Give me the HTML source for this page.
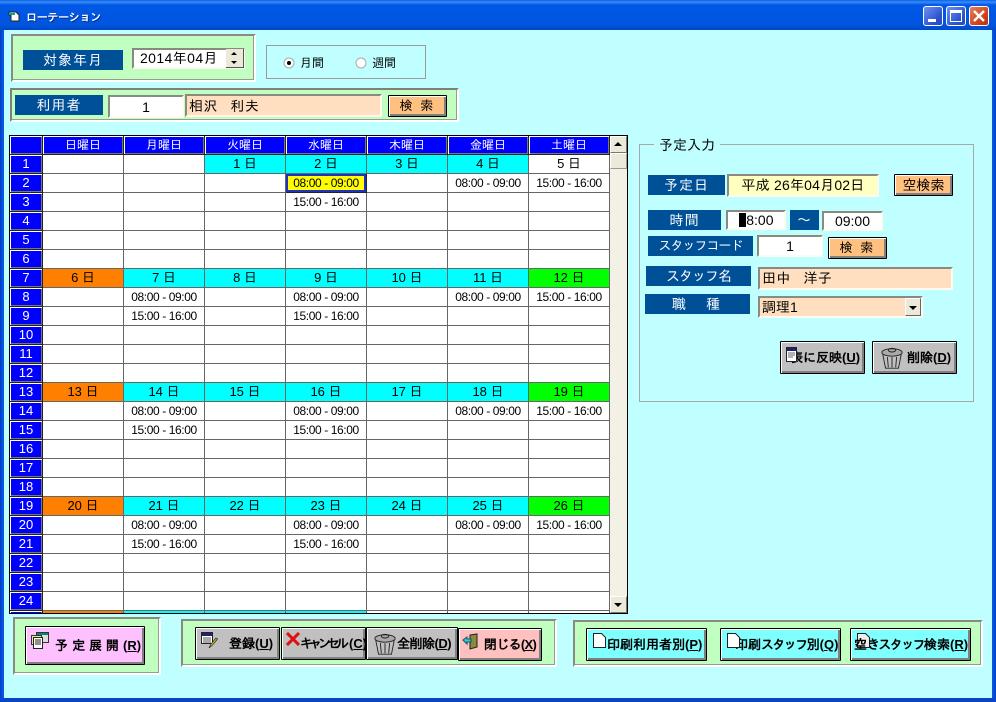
<!DOCTYPE html>
<html><head><meta charset="utf-8"><style>
html,body{margin:0;padding:0}
body{width:996px;height:702px;overflow:hidden;position:relative;background:#BFFFFF;font:12px "Liberation Sans","IPAGothic","Noto Sans CJK JP",sans-serif;color:#000}
.a{position:absolute;box-sizing:border-box;white-space:nowrap}
.p{background:#C0FFC0;border:2px solid;border-color:#8a8a80 #fff #fff #8a8a80;box-shadow:inset -1px -1px 0 #9a9a90}
.l{background:#005098;color:#fff;font-size:14px;letter-spacing:1px;text-align:center;line-height:20px;height:20px}
.i{background:#fff;border:2px solid;border-color:#8a8a80 #fbfbf0 #fbfbf0 #8a8a80;font-size:14px;text-align:center}
.pe{background:#FFDFBF;text-align:left;font-size:14px;letter-spacing:.5px;word-spacing:8px;padding-left:2px}
.b{border:1px solid #000;border-radius:1px;box-shadow:inset 1px 1px 0 #fff,inset -2px -2px 0 #808080;text-align:left;font-weight:bold;color:#000;font-size:13px}
.o{background:#FFC080;font-weight:normal;font-size:13px;line-height:20px;text-align:center}
.g{background:#C0C0C0;line-height:31px}
.cy{background:#80FFFF;line-height:31px}
.k{letter-spacing:-1.6px}
.wb{width:20px;height:20px;top:6px;border:1px solid #fff;border-radius:3px;background:linear-gradient(135deg,#6e94ee,#2a52d0 70%,#2348c4)}
table{border-collapse:collapse;table-layout:fixed;position:absolute;left:-1px;top:-1px}
td,th{padding:0;height:18px;line-height:18px;border:1px solid #666;text-align:center;font-weight:normal;font-size:12px;letter-spacing:-.4px;overflow:hidden;background:#fff}
th{background:#0000FF;color:#fff;border:1px solid #222;box-shadow:inset 1px 1px 0 #fff,inset -1px -1px 0 #777;letter-spacing:0}
tbody th{font-size:13px}
thead th{font-size:12px}
.c{background:#00FFFF}.r{background:#FF8000}.n{background:#00FF00}
.d{font-size:13px;letter-spacing:0}
td.s{background:#FFFF00;box-shadow:inset 0 0 0 2px #2233bb;border:1px solid #222;border-top-color:#d33}
</style></head><body>

<!-- window frame -->
<div class="a" style="left:0;top:0;width:996px;height:30px;background:linear-gradient(#0a5fe8 0,#3a8cf8 2px,#0058e6 5px,#0055e0 24px,#0048c8 30px)"></div>
<div class="a" style="left:0;top:30px;width:4px;height:672px;background:linear-gradient(90deg,#0040c0,#0a5cf0)"></div>
<div class="a" style="left:992px;top:30px;width:4px;height:672px;background:linear-gradient(90deg,#0a5cf0,#0040c0)"></div>
<div class="a" style="left:0;top:698px;width:996px;height:4px;background:#0845c8"></div>
<svg class="a" style="left:8px;top:11px" width="12" height="12" viewBox="0 0 12 12"><path d="M1 1h7l3 3v6H3V4H1z" fill="#fff" stroke="#222"/><path d="M1 2h6v2H1z" fill="#0a8"/></svg>
<div class="a" style="left:26px;top:10px;color:#fff;font-weight:bold;font-size:11px;letter-spacing:-.3px;line-height:16px;text-shadow:1px 1px 0 #003090">ローテーション</div>
<div class="a wb" style="left:923px"><div class="a" style="left:4px;top:12px;width:8px;height:3px;background:#fff"></div></div>
<div class="a wb" style="left:946px"><div class="a" style="left:3px;top:3px;width:12px;height:12px;border:1px solid #fff;border-top-width:3px"></div></div>
<div class="a wb" style="left:969px;background:linear-gradient(135deg,#e8805a,#d0401c 65%,#b83010)"><svg class="a" style="left:3px;top:3px" width="12" height="12"><path d="M1 1l10 10M11 1L1 11" stroke="#fff" stroke-width="2.4"/></svg></div>

<!-- top controls -->
<div class="a p" style="left:11px;top:34px;width:245px;height:48px"></div>
<div class="a l" style="left:23px;top:50px;width:100px">対象年月</div>
<div class="a i" style="left:132px;top:48px;width:113px;height:21px;text-align:left;padding-left:6px;line-height:17px;letter-spacing:.4px">2014年04月</div>
<div class="a" style="left:226px;top:49px;width:18px;height:10px;background:#ece9d8;border-bottom:1px solid #555;border-right:1px solid #555"><div class="a" style="left:5px;top:3px;border:3px solid transparent;border-bottom:3px solid #000;border-top:0"></div></div>
<div class="a" style="left:226px;top:58px;width:18px;height:10px;background:#ece9d8;border-bottom:1px solid #555;border-right:1px solid #555"><div class="a" style="left:5px;top:3px;border:3px solid transparent;border-top:3px solid #000;border-bottom:0"></div></div>

<div class="a" style="left:266px;top:45px;width:160px;height:34px;border:1px solid #9a9a9a"></div>
<svg class="a" style="left:283px;top:57px" width="13" height="13"><circle cx="6" cy="6" r="5" fill="#fff" stroke="#aaa"/><circle cx="6" cy="6" r="2" fill="#000"/></svg>
<div class="a" style="left:300px;top:55px;line-height:16px">月間</div>
<svg class="a" style="left:355px;top:57px" width="13" height="13"><circle cx="6" cy="6" r="5" fill="#fff" stroke="#aaa"/></svg>
<div class="a" style="left:372px;top:55px;line-height:16px">週間</div>

<div class="a p" style="left:10px;top:88px;width:449px;height:34px;border-color:#808078 #fff #fff #808078"></div>
<div class="a l" style="left:15px;top:95px;width:88px">利用者</div>
<div class="a i" style="left:108px;top:95px;width:76px;height:23px;line-height:20px">1</div>
<div class="a i pe" style="left:185px;top:94px;width:197px;height:23px;line-height:20px">相沢 利夫</div>
<div class="a b o" style="left:388px;top:95px;width:59px;height:22px;letter-spacing:2px;word-spacing:0">検 索</div>

<!-- grid -->
<div class="a" style="left:9px;top:135px;width:619px;height:479px;border:1px solid #000;background:#fff;overflow:hidden">
<table style="width:601px">
<colgroup><col style="width:33px"><col style="width:81px"><col style="width:81px"><col style="width:81px"><col style="width:81px"><col style="width:81px"><col style="width:81px"><col style="width:81px"></colgroup>
<thead><tr><th></th><th>日曜日</th><th>月曜日</th><th>火曜日</th><th>水曜日</th><th>木曜日</th><th>金曜日</th><th>土曜日</th></tr></thead>
<tbody>
<tr><th>1</th><td></td><td></td><td class="c d">1 日</td><td class="c d">2 日</td><td class="c d">3 日</td><td class="c d">4 日</td><td class="d">5 日</td></tr>
<tr><th>2</th><td></td><td></td><td></td><td class="s">08:00 - 09:00</td><td></td><td>08:00 - 09:00</td><td>15:00 - 16:00</td></tr>
<tr><th>3</th><td></td><td></td><td></td><td>15:00 - 16:00</td><td></td><td></td><td></td></tr>
<tr><th>4</th><td></td><td></td><td></td><td></td><td></td><td></td><td></td></tr>
<tr><th>5</th><td></td><td></td><td></td><td></td><td></td><td></td><td></td></tr>
<tr><th>6</th><td></td><td></td><td></td><td></td><td></td><td></td><td></td></tr>
<tr><th>7</th><td class="r d">6 日</td><td class="c d">7 日</td><td class="c d">8 日</td><td class="c d">9 日</td><td class="c d">10 日</td><td class="c d">11 日</td><td class="n d">12 日</td></tr>
<tr><th>8</th><td></td><td>08:00 - 09:00</td><td></td><td>08:00 - 09:00</td><td></td><td>08:00 - 09:00</td><td>15:00 - 16:00</td></tr>
<tr><th>9</th><td></td><td>15:00 - 16:00</td><td></td><td>15:00 - 16:00</td><td></td><td></td><td></td></tr>
<tr><th>10</th><td></td><td></td><td></td><td></td><td></td><td></td><td></td></tr>
<tr><th>11</th><td></td><td></td><td></td><td></td><td></td><td></td><td></td></tr>
<tr><th>12</th><td></td><td></td><td></td><td></td><td></td><td></td><td></td></tr>
<tr><th>13</th><td class="r d">13 日</td><td class="c d">14 日</td><td class="c d">15 日</td><td class="c d">16 日</td><td class="c d">17 日</td><td class="c d">18 日</td><td class="n d">19 日</td></tr>
<tr><th>14</th><td></td><td>08:00 - 09:00</td><td></td><td>08:00 - 09:00</td><td></td><td>08:00 - 09:00</td><td>15:00 - 16:00</td></tr>
<tr><th>15</th><td></td><td>15:00 - 16:00</td><td></td><td>15:00 - 16:00</td><td></td><td></td><td></td></tr>
<tr><th>16</th><td></td><td></td><td></td><td></td><td></td><td></td><td></td></tr>
<tr><th>17</th><td></td><td></td><td></td><td></td><td></td><td></td><td></td></tr>
<tr><th>18</th><td></td><td></td><td></td><td></td><td></td><td></td><td></td></tr>
<tr><th>19</th><td class="r d">20 日</td><td class="c d">21 日</td><td class="c d">22 日</td><td class="c d">23 日</td><td class="c d">24 日</td><td class="c d">25 日</td><td class="n d">26 日</td></tr>
<tr><th>20</th><td></td><td>08:00 - 09:00</td><td></td><td>08:00 - 09:00</td><td></td><td>08:00 - 09:00</td><td>15:00 - 16:00</td></tr>
<tr><th>21</th><td></td><td>15:00 - 16:00</td><td></td><td>15:00 - 16:00</td><td></td><td></td><td></td></tr>
<tr><th>22</th><td></td><td></td><td></td><td></td><td></td><td></td><td></td></tr>
<tr><th>23</th><td></td><td></td><td></td><td></td><td></td><td></td><td></td></tr>
<tr><th>24</th><td></td><td></td><td></td><td></td><td></td><td></td><td></td></tr>
<tr><th></th><td class="r"></td><td class="c"></td><td class="c"></td><td class="c"></td><td></td><td></td><td></td></tr>
</tbody></table>
<!-- scrollbar -->
<div class="a" style="left:600px;top:0;width:17px;height:477px;background:#f3f1e6"></div>
<div class="a" style="left:600px;top:0;width:17px;height:17px;background:#ece9d8;border:1px solid;border-color:#fff #777 #777 #fff"><div class="a" style="left:3px;top:5px;border:4px solid transparent;border-bottom:4px solid #000;border-top:0"></div></div>
<div class="a" style="left:600px;top:17px;width:17px;height:16px;background:#ece9d8;border:1px solid;border-color:#fff #999 #999 #fff"></div>
<div class="a" style="left:600px;top:460px;width:17px;height:17px;background:#ece9d8;border:1px solid;border-color:#fff #777 #777 #fff"><div class="a" style="left:3px;top:6px;border:4px solid transparent;border-top:4px solid #000;border-bottom:0"></div></div>
</div>

<!-- right frame -->
<div class="a" style="left:639px;top:144px;width:335px;height:258px;border:1px solid #a8a8a8"></div>
<div class="a" style="left:654px;top:136px;width:66px;height:18px;background:#BFFFFF;font-size:14px;line-height:18px;text-align:center">予定入力</div>
<div class="a l" style="left:648px;top:175px;width:77px">予定日</div>
<div class="a i" style="left:727px;top:174px;width:152px;height:23px;background:#FFFFC0;line-height:19px;letter-spacing:.2px">平成 26年04月02日</div>
<div class="a b o" style="left:894px;top:174px;width:59px;height:22px;font-size:14px">空検索</div>
<div class="a l" style="left:648px;top:210px;width:73px">時間</div>
<div class="a i" style="left:726px;top:210px;width:60px;height:20px;line-height:17px">08:00</div>
<div class="a" style="left:739px;top:213px;width:7px;height:14px;background:#000"></div>
<div class="a l" style="left:790px;top:210px;width:29px">～</div>
<div class="a i" style="left:822px;top:211px;width:61px;height:20px;line-height:17px">09:00</div>
<div class="a l" style="left:648px;top:236px;width:105px;font-size:13px;letter-spacing:-1px">スタッフコード</div>
<div class="a i" style="left:757px;top:235px;width:66px;height:22px;line-height:19px">1</div>
<div class="a b o" style="left:828px;top:237px;width:59px;height:22px;letter-spacing:2px">検 索</div>
<div class="a l" style="left:646px;top:266px;width:105px;letter-spacing:-1px">スタッフ名</div>
<div class="a i pe" style="left:758px;top:267px;width:195px;height:23px;line-height:19px">田中 洋子</div>
<div class="a l" style="left:645px;top:294px;width:105px;letter-spacing:3px">職　種</div>
<div class="a i pe" style="left:758px;top:296px;width:165px;height:22px;line-height:18px;letter-spacing:0">調理1</div>
<div class="a" style="left:905px;top:298px;width:16px;height:18px;background:#ece9d8;border:1px solid;border-color:#fff #666 #666 #fff"><div class="a" style="left:3px;top:7px;border:4px solid transparent;border-top:4px solid #000;border-bottom:0"></div></div>

<div class="a b g" style="left:780px;top:341px;width:85px;height:33px;padding-left:9px">表に反映(<u>U</u>)</div>
<svg class="a" style="left:786px;top:347px" width="12" height="16"><path d="M.5.500h10v14H.5z" fill="#fff" stroke="#223"/><path d="M1 1h9v3H1z" fill="#226"/><path d="M2 6h7M2 8h7M2 10h5" stroke="#666"/></svg>
<div class="a b g" style="left:872px;top:341px;width:85px;height:33px;padding-left:34px">削除(<u>D</u>)</div>
<svg class="a" style="left:880px;top:346px" width="24" height="24" viewBox="0 0 26 26"><ellipse cx="13" cy="7" rx="11" ry="4" fill="#aaa" stroke="#222"/><ellipse cx="13" cy="4.5" rx="4" ry="2" fill="none" stroke="#222"/><path d="M3 9l3 15h14l3-15M8 12l1 11M13 12v11M18 12l-1 11" fill="none" stroke="#222"/></svg>

<!-- bottom panels -->
<div class="a p" style="left:13px;top:617px;width:148px;height:58px"></div>
<div class="a b" style="left:25px;top:626px;width:120px;height:39px;background:#FFC0FF;line-height:37px;padding-left:29px"><span style="letter-spacing:4px">予定展開</span>(<u>R</u>)</div>
<svg class="a" style="left:31px;top:632px" width="18" height="17" viewBox="0 0 18 17"><path d="M5.500.5h12v10h-12z" fill="#ddd" stroke="#333"/><path d="M6 1h11v2H6z" fill="#087"/><path d="M.5 3.500h10v9h-10z" fill="#ee8" stroke="#333"/><path d="M2.500 5.500h9v11h-9z" fill="#fff" stroke="#222"/><path d="M4 8h6M4 10h6M4 12h6" stroke="#222"/></svg>

<div class="a p" style="left:181px;top:619px;width:376px;height:48px"></div>
<div class="a b g" style="left:195px;top:627px;width:85px;height:33px;padding-left:33px">登録(<u>U</u>)</div>
<svg class="a" style="left:201px;top:632px" width="17" height="18" viewBox="0 0 17 18"><path d="M.5.500h11v11H.5z" fill="#fff" stroke="#223"/><path d="M1 1h10v3H1z" fill="#226"/><path d="M2 6h8M2 8h8M2 10h8" stroke="#555"/><path d="M8 16l2-4 5-6 1.500 1-5 6z" fill="#dc2" stroke="#222" stroke-width=".7"/></svg>
<div class="a b g" style="left:281px;top:627px;width:85px;height:33px;padding-left:18px"><span style="letter-spacing:-4px">キャンセル</span><span style="margin-left:4px">(<u>C</u>)</span></div>
<svg class="a" style="left:286px;top:632px" width="14" height="14"><path d="M1 1l12 12M13 1L1 13" stroke="#e01010" stroke-width="3"/></svg>
<div class="a b g" style="left:366px;top:627px;width:92px;height:33px;padding-left:30px;letter-spacing:-.5px">全削除(<u>D</u>)</div>
<svg class="a" style="left:373px;top:632px" width="24" height="24" viewBox="0 0 26 26"><ellipse cx="13" cy="7" rx="11" ry="4" fill="#aaa" stroke="#222"/><ellipse cx="13" cy="4.5" rx="4" ry="2" fill="none" stroke="#222"/><path d="M3 9l3 15h14l3-15M8 12l1 11M13 12v11M18 12l-1 11" fill="none" stroke="#222"/></svg>
<div class="a b g" style="left:458px;top:628px;width:84px;height:33px;background:#FFC0C0;padding-left:25px;letter-spacing:-.7px">閉じる(<u>X</u>)</div>
<svg class="a" style="left:462px;top:633px" width="17" height="17" viewBox="0 0 17 17"><path d="M8 2l7-1v13l-7 2z" fill="#8a8a40" stroke="#222"/><path d="M1 7l4-3v2h4v3H5v2z" fill="#3cc" stroke="#156"/></svg>

<div class="a p" style="left:573px;top:620px;width:410px;height:47px"></div>
<div class="a b cy" style="left:586px;top:628px;width:121px;height:33px;padding-left:20px">印刷利用者別(<u>P</u>)</div>
<svg class="a" style="left:593px;top:633px" width="13" height="17"><path d="M.5.500h8l4 4v10H.5z" fill="#fff" stroke="#222"/></svg>
<div class="a b cy" style="left:720px;top:628px;width:121px;height:33px;padding-left:14px">印刷<span class="k">スタッフ</span>別(<u>Q</u>)</div>
<svg class="a" style="left:727px;top:633px" width="13" height="17"><path d="M.5.500h8l4 4v10H.5z" fill="#fff" stroke="#222"/></svg>
<div class="a b cy" style="left:850px;top:628px;width:121px;height:33px"></div>
<svg class="a" style="left:857px;top:633px" width="13" height="17"><path d="M.5.500h8l4 4v10H.5z" fill="#eee" stroke="#222"/></svg>
<div class="a" style="left:854px;top:629px;line-height:31px;font-weight:bold;font-size:13px">空<span class="k">きスタッフ</span>検索(<u>R</u>)</div>
</body></html>
